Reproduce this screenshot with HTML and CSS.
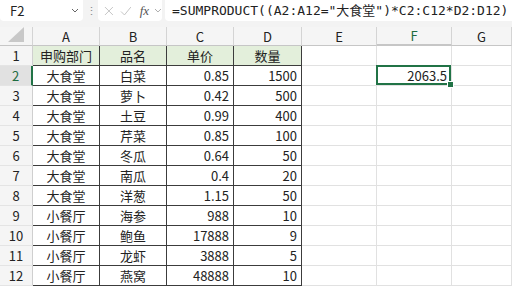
FILE: index.html
```html
<!DOCTYPE html>
<html lang="zh-CN">

<head>
  <meta charset='utf-8'>
  <title>SUMPRODUCT</title>
  <link rel="stylesheet" href="styles.css">
</head>

<body>
  <div class='toolbar'>
    <div class='namebox'>
      <span class='name'>F2</span>
      <svg class='chev' width='8' height='5' viewBox='0 0 8 5'><path d='M1 1l3 3 3-3' fill='none' stroke='#666' stroke-width='1'/></svg>
    </div>
    <div class='dots'>⋮</div>
    <div class='fxbox'>
      <svg width='12' height='12' viewBox='0 0 12 12'><path d='M2 2l8 8M10 2l-8 8' stroke='#c4c4c4' stroke-width='1'/></svg>
      <svg width='12' height='12' viewBox='0 0 12 12'><path d='M1 6.5l3.5 3.5L11 2' fill='none' stroke='#c4c4c4' stroke-width='1'/></svg>
      <span class='fx'>fx</span>
      <svg width='8' height='5' viewBox='0 0 8 5'><path d='M1 1l3 3 3-3' fill='none' stroke='#aaa' stroke-width='1'/></svg>
    </div>
    <div class='formula'>=SUMPRODUCT((A2:A12="大食堂")*C2:C12*D2:D12)</div>
  </div>

  <table class='sheet'>
    <colgroup>
      <col style='width:33px'>
      <col style='width:67px'>
      <col style='width:67px'>
      <col style='width:67px'>
      <col style='width:68px'>
      <col style='width:75px'>
      <col style='width:75px'>
      <col style='width:60px'>
    </colgroup>
    <tr class='colhead'>
      <th class='corner'><svg width='16' height='15' viewBox='0 0 16 15'><path d='M16 0V15H0Z' fill='#c8c8c8'/></svg></th>
      <th>A</th><th>B</th><th>C</th><th>D</th><th>E</th><th class='selcol'>F</th><th>G</th>
    </tr>
    <tr class='title'>
      <th class='rn'>1</th>
      <td class='d c'>申购部门</td><td class='d c'>品名</td><td class='d c'>单价</td><td class='d c'>数量</td>
      <td></td><td></td><td></td>
    </tr>
    <tr>
      <th class='rn selrow'>2</th>
      <td class='d c'>大食堂</td><td class='d c'>白菜</td><td class='d n'>0.85</td><td class='d n'>1500</td>
      <td></td><td class='n active'>2063.5</td><td></td>
    </tr>
    <tr>
      <th class='rn'>3</th>
      <td class='d c'>大食堂</td><td class='d c'>萝卜</td><td class='d n'>0.42</td><td class='d n'>500</td>
      <td></td><td></td><td></td>
    </tr>
    <tr>
      <th class='rn'>4</th>
      <td class='d c'>大食堂</td><td class='d c'>土豆</td><td class='d n'>0.99</td><td class='d n'>400</td>
      <td></td><td></td><td></td>
    </tr>
    <tr>
      <th class='rn'>5</th>
      <td class='d c'>大食堂</td><td class='d c'>芹菜</td><td class='d n'>0.85</td><td class='d n'>100</td>
      <td></td><td></td><td></td>
    </tr>
    <tr>
      <th class='rn'>6</th>
      <td class='d c'>大食堂</td><td class='d c'>冬瓜</td><td class='d n'>0.64</td><td class='d n'>50</td>
      <td></td><td></td><td></td>
    </tr>
    <tr>
      <th class='rn'>7</th>
      <td class='d c'>大食堂</td><td class='d c'>南瓜</td><td class='d n'>0.4</td><td class='d n'>20</td>
      <td></td><td></td><td></td>
    </tr>
    <tr>
      <th class='rn'>8</th>
      <td class='d c'>大食堂</td><td class='d c'>洋葱</td><td class='d n'>1.15</td><td class='d n'>50</td>
      <td></td><td></td><td></td>
    </tr>
    <tr>
      <th class='rn'>9</th>
      <td class='d c'>小餐厅</td><td class='d c'>海参</td><td class='d n'>988</td><td class='d n'>10</td>
      <td></td><td></td><td></td>
    </tr>
    <tr>
      <th class='rn'>10</th>
      <td class='d c'>小餐厅</td><td class='d c'>鲍鱼</td><td class='d n'>17888</td><td class='d n'>9</td>
      <td></td><td></td><td></td>
    </tr>
    <tr>
      <th class='rn'>11</th>
      <td class='d c'>小餐厅</td><td class='d c'>龙虾</td><td class='d n'>3888</td><td class='d n'>5</td>
      <td></td><td></td><td></td>
    </tr>
    <tr>
      <th class='rn'>12</th>
      <td class='d c'>小餐厅</td><td class='d c'>燕窝</td><td class='d n'>48888</td><td class='d n'>10</td>
      <td></td><td></td><td></td>
    </tr>
  </table>
</body>

</html>
```

FILE: styles.css
```css
* {
  margin: 0;
  padding: 0;
  box-sizing: border-box;
}

body {
  width: 512px;
  height: 290px;
  overflow: hidden;
  background: #fff;
  font-family: "Noto Sans CJK SC", "Noto Sans", sans-serif;
  font-size: 13px;
  color: #222;
}

.toolbar {
  height: 27px;
  background: #f3f3f3;
  display: flex;
  align-items: flex-start;
  gap: 3px;
}

.namebox {
  width: 83px;
  height: 21px;
  background: #fff;
  border-radius: 0 0 4px 4px;
  display: flex;
  align-items: center;
  justify-content: space-between;
  padding: 0 4px 0 10px;
}

.name {
  font-size: 13px;
  color: #222;
}

.dots {
  width: 9px;
  height: 21px;
  line-height: 21px;
  text-align: center;
  color: #888;
  font-size: 11px;
}

.fxbox {
  width: 64px;
  height: 21px;
  background: #fff;
  border-radius: 0 0 4px 4px;
  display: flex;
  align-items: center;
  gap: 5px;
  padding-left: 5px;
}

.fx {
  font-family: "Liberation Serif", serif;
  font-style: italic;
  font-size: 13px;
  color: #555;
  margin-left: 3px;
}

.formula {
  flex: 1;
  height: 21px;
  background: #fff;
  border-radius: 0 0 0 4px;
  padding-left: 7px;
  line-height: 21px;
  font-family: "DejaVu Sans Mono", "Noto Sans CJK SC", monospace;
  font-size: 13px;
  white-space: nowrap;
  color: #222;
}

.sheet {
  table-layout: fixed;
  border-collapse: separate;
  border-spacing: 0;
  width: 512px;
}

.sheet tr {
  height: 20px;
}

.sheet tr.colhead {
  height: 18px;
}

.sheet th,
.sheet td {
  border-right: 1px solid #e1e1e1;
  border-bottom: 1px solid #e1e1e1;
  padding: 0 4px;
  font-weight: normal;
  white-space: nowrap;
  overflow: hidden;
  vertical-align: middle;
  line-height: 18px;
}

.sheet .colhead th {
  background: #f5f5f5;
  border-right-color: #d4d4d4;
  border-bottom-color: #c6c6c6;
  text-align: center;
  font-size: 13px;
  line-height: 15px;
  overflow: visible;
}

.colhead .corner {
  padding: 0;
  text-align: right;
  vertical-align: bottom;
  line-height: 0;
}

.corner svg {
  margin: 0 1px 1px 0;
}

.colhead .selcol {
  background: #e1e1e1;
  color: #1d6b3f;
  border-bottom: 2px solid #217346;
}

.rn {
  background: #f5f5f5;
  text-align: center;
  border-right-color: #cfcfcf !important;
  border-bottom-color: #e4e4e4 !important;
}

.rn.selrow {
  background: #e1e1e1;
  color: #1d6b3f;
  border-right: 2px solid #217346 !important;
}

.sheet td.d {
  border-right-color: #3c3c3c;
  border-bottom-color: #3c3c3c;
}

.title td.d {
  background: #e3efdb;
}

.c {
  text-align: center;
}

.n {
  text-align: right;
}

.sheet td.active {
  position: relative;
  overflow: visible;
}

.active::after {
  content: '';
  position: absolute;
  left: -1px;
  top: -1px;
  right: 0;
  bottom: 0;
  border: 2px solid #217346;
}

.active::before {
  content: '';
  position: absolute;
  right: -3px;
  bottom: -3px;
  width: 5px;
  height: 5px;
  background: #217346;
  border: 1px solid #fff;
  z-index: 1;
}
```
